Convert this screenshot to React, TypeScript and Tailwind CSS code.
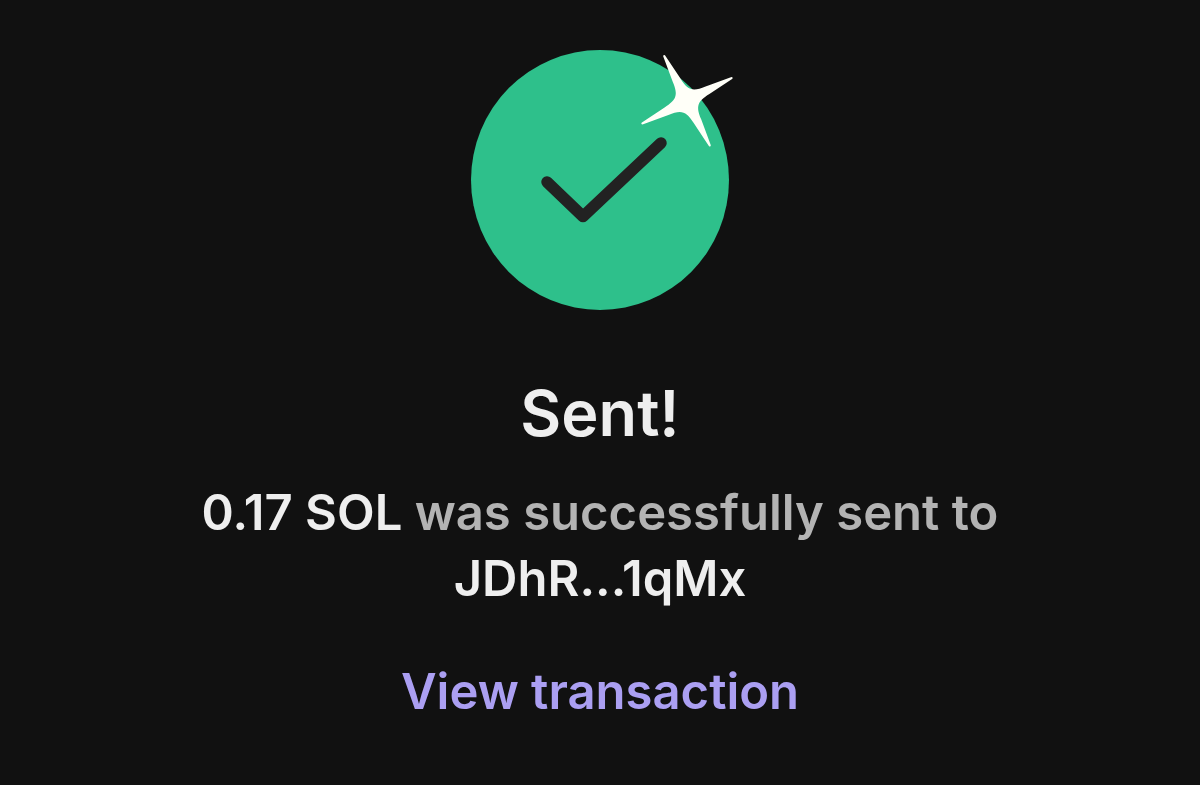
export default function App() {
  return (
    <main className="flex min-h-screen flex-col items-center bg-[#111111] px-8 pt-[50px] pb-16 text-center font-['Inter',sans-serif] font-semibold text-[#eeeeee]">
      <svg className="h-[260px] w-[268px] overflow-visible" viewBox="466 50 268 260" role="img" aria-label="Success">
        <ellipse cx="600" cy="180" rx="129" ry="130" fill="#2ec08b" />
        <path d="M547 182 L583 216.5 L661 143" fill="none" stroke="#222222" strokeWidth="11.5" strokeLinecap="round" strokeLinejoin="round" />
        <path
          transform="translate(687 100.7) rotate(-27)"
          d="M1 -50.5 L4.2 -23 C5.2 -9 9 -5.2 23 -4.2 L50.5 -1 Q52 0 50.5 1 L23 4.2 C9 5.2 5.2 9 4.2 23 L1 50.5 Q0 52 -1 50.5 L-4.2 23 C-5.2 9 -9 5.2 -23 4.2 L-50.5 1 Q-52 0 -50.5 -1 L-23 -4.2 C-9 -5.2 -5.2 -9 -4.2 -23 L-1 -50.5 Q0 -52 1 -50.5 Z"
          fill="#fffff8"
        />
      </svg>
      <h1 className="mt-[63px] text-[63px] leading-[80px]">Sent!</h1>
      <p className="mt-[27px] max-w-[840px] text-[49px] leading-[66px] text-[#b3b3b3]">
        <span className="text-[#eeeeee]">0.17 SOL</span> was successfully sent to <span className="text-[#eeeeee]">JDhR...1qMx</span>
      </p>
      <a href="#transaction" className="mt-[48px] text-[49px] leading-[64px] text-[#ab9ff2]">View transaction</a>
    </main>
  );
}
